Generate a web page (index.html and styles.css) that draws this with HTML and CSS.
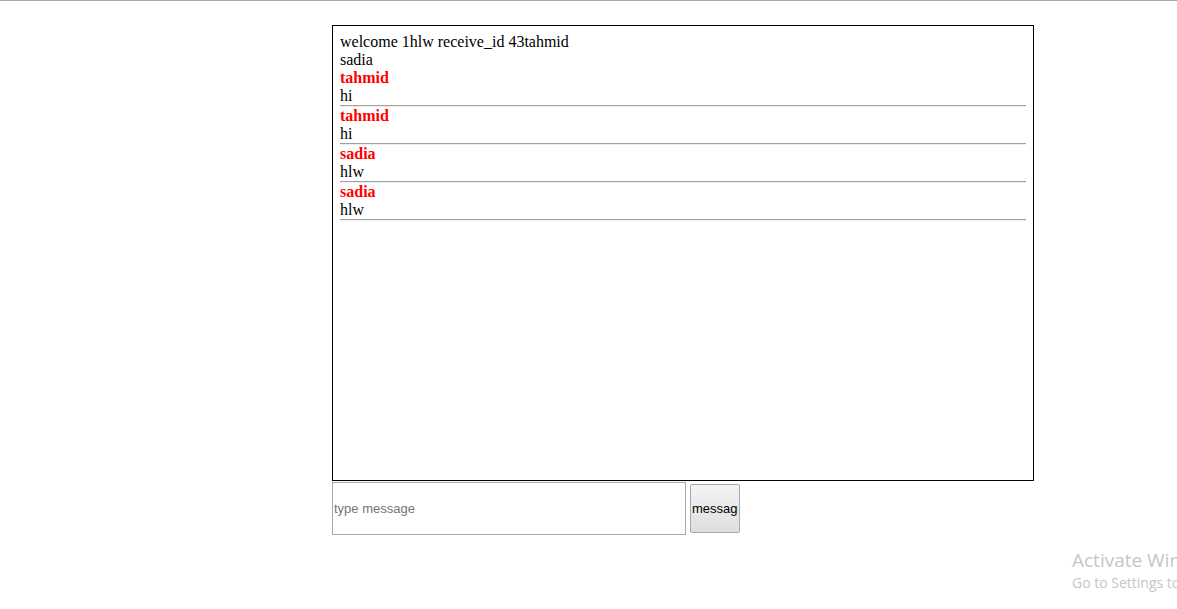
FILE: index.html
```html
<!DOCTYPE html>
<html>
<head>
<meta charset="utf-8">
<title>chat</title>
<link rel="stylesheet" href="styles.css">
</head>
<body>
<div class="topline"></div>
<div class="page">
  <div class="chatbox">
    <div class="line first">welcome 1hlw receive_id 43tahmid</div>
    <div class="line">sadia</div>
    <div class="msg">
      <div class="name">tahmid</div>
      <div class="line">hi</div>
      <hr class="sep">
    </div>
    <div class="msg">
      <div class="name">tahmid</div>
      <div class="line">hi</div>
      <hr class="sep">
    </div>
    <div class="msg">
      <div class="name">sadia</div>
      <div class="line">hlw</div>
      <hr class="sep">
    </div>
    <div class="msg">
      <div class="name">sadia</div>
      <div class="line">hlw</div>
      <hr class="sep">
    </div>
  </div>
  <div class="composer">
    <input class="field" type="text" placeholder="type message">
    <button class="send"><span class="send-label">message</span></button>
  </div>
</div>
<div class="watermark">
  <div class="wm-title">Activate Windows</div>
  <div class="wm-sub">Go to Settings to activate Windows.</div>
</div>
</body>
</html>
```
FILE: styles.css
```css
html, body {
  margin: 0;
  padding: 0;
  background: #fff;
  overflow: hidden;
  width: 1177px;
  height: 609px;
}
body {
  font-family: "Liberation Serif", "Times New Roman", serif;
  font-size: 16px;
  color: #000;
  position: relative;
}
.topline {
  height: 1px;
  background: #a8a8a8;
}
.page {
  padding: 24px 0 0 332px;
}
.chatbox {
  width: 686px;
  height: 440px;
  border: 1px solid #000;
  padding: 7px;
  line-height: 18px;
}
.line {
  height: 18px;
  white-space: nowrap;
}
.name {
  height: 18px;
  color: #ff0000;
  font-weight: bold;
}
.sep {
  margin: 0;
  border: 0;
  height: 0;
  border-top: 1px solid #a0a0a0;
  border-bottom: 1px solid #eeeeee;
}
.composer {
  display: flex;
  align-items: center;
  gap: 4px;
  margin-top: 1px;
}
.field {
  box-sizing: border-box;
  width: 354px;
  height: 53px;
  margin: 0;
  padding: 0 1px;
  border: 1px solid #a9a9a9;
  font-family: "Liberation Sans", Arial, sans-serif;
  font-size: 13px;
  color: #000;
  outline: none;
}
.field::placeholder {
  color: #757575;
}
.send {
  box-sizing: border-box;
  width: 50px;
  height: 49px;
  margin: 0;
  padding: 0 1px;
  border: 1px solid #a9a9a9;
  border-radius: 2px;
  background: linear-gradient(#f4f4f4, #dedede);
  font-family: "Liberation Sans", Arial, sans-serif;
  font-size: 13px;
  color: #000;
  text-align: left;
}
.send-label {
  display: block;
  overflow: hidden;
  white-space: nowrap;
}
.watermark {
  position: absolute;
  left: 1072px;
  top: 547px;
  font-family: "Open Sans", "Noto Sans", sans-serif;
  color: #c6c6c6;
  white-space: nowrap;
}
.wm-title {
  font-size: 19px;
  line-height: 26px;
}
.wm-sub {
  font-size: 14px;
  line-height: 20px;
}
```
